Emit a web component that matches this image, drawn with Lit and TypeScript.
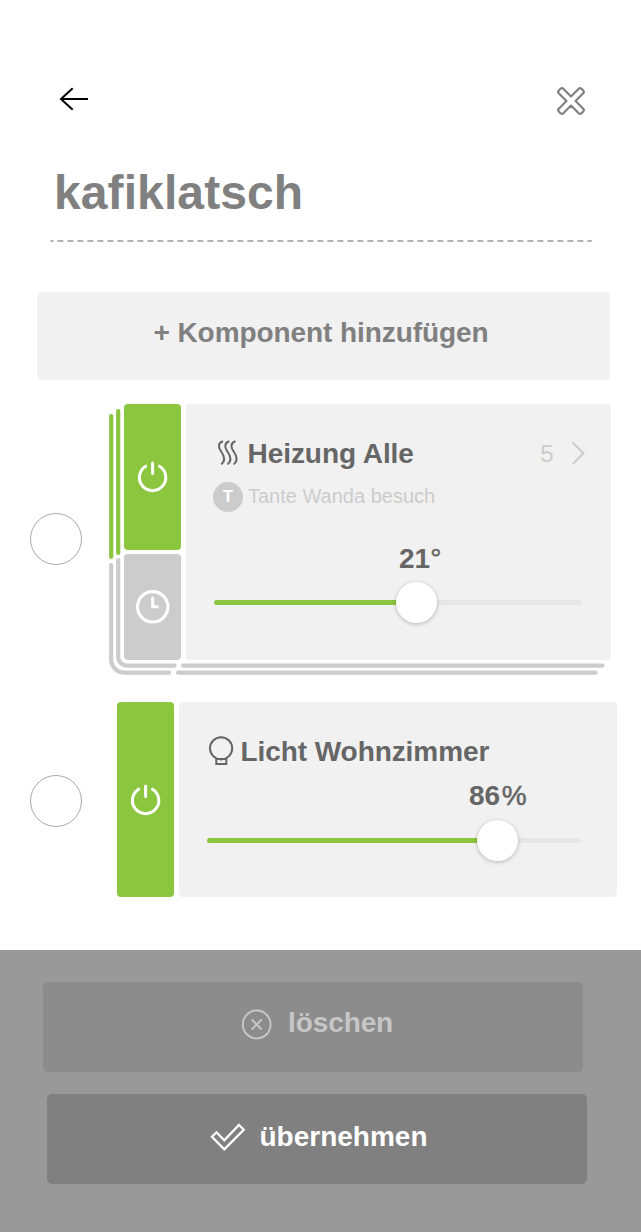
import { LitElement, html, css, svg } from "lit";
import { customElement, property } from "lit/decorators.js";

const powerIcon = html`<svg width="34" height="34" viewBox="-16.6 -17.4 34 34" fill="none" stroke="#fff" stroke-width="3" stroke-linecap="round">
  <path d="M-6.9 -11.2A13.2 13.2 0 1 0 6.9 -11.2M0 -14.3V-3.8" />
</svg>`;

const clockIcon = html`<svg width="36" height="36" viewBox="-17.7 -17.8 36 36" fill="none" stroke="#fff" stroke-width="3.1" stroke-linecap="round" stroke-linejoin="round">
  <circle r="15.2" /><path d="M0 -8.8V0H4.6" />
</svg>`;

const wave = (x: number) =>
  svg`<path d="M${x + 3.6} 1.3C${x - 0.3} 2.6 ${x - 0.7} 7 ${x + 2} 10.6C${x + 4.6} 14.3 ${x + 8} 19.6 ${x + 3.1} 23.6" />`;

const heatIcon = html`<svg width="26" height="26" viewBox="0 0.8 26 26" fill="none" stroke="#666" stroke-width="2" stroke-linecap="round">
  ${[4.7, 11, 17.2].map(wave)}
</svg>`;

const bulbIcon = html`<svg width="28" height="30" viewBox="0 0 28 30" fill="none" stroke="#666" stroke-width="2">
  <circle cx="14.1" cy="11.3" r="11.1" /><path d="M9.3 22.1H19.3V27H9.3Z" />
</svg>`;

@customElement("value-slider")
export class ValueSlider extends LitElement {
  @property({ type: Number }) percent = 0;

  static styles = css`
    :host { display: block; }
    .track { position: relative; display: flex; align-items: center; height: 41px; }
    .track::before { content: ""; flex: 1; height: 5px; border-radius: 3px; background: #e6e6e6; }
    .fill { position: absolute; left: 0; top: 18px; height: 5px; border-radius: 3px; background: #8cc63f; }
    .knob {
      position: absolute; top: 0; width: 41px; height: 41px; margin-left: -20.5px;
      border-radius: 50%; background: #fff; box-shadow: 0 1px 4px rgba(0, 0, 0, 0.25);
    }
  `;

  render() {
    return html`<div class="track">
      <div class="fill" style="width:${this.percent}%"></div>
      <div class="knob" style="left:${this.percent}%"></div>
    </div>`;
  }
}

@customElement("app-root")
export class AppRoot extends LitElement {
  static styles = css`
    :host {
      display: flex; flex-direction: column; width: 641px; height: 1232px; overflow: hidden;
      background: #fff; color: #666; font: bold 28px/32px "Liberation Sans", Arial, sans-serif;
    }
    * { box-sizing: border-box; }
    svg { display: block; flex: none; overflow: visible; }
    .top { display: flex; justify-content: space-between; height: 162px; padding: 86px 55px 0 59px; }
    .title { margin: 0 0 0 54px; height: 78px; font-size: 48px; line-height: 62px; letter-spacing: 0.1px; color: #808080; }
    .rule { margin: 0 0 50px 50px; }
    .add {
      height: 88px; margin: 0 31px 0 37px; padding: 25px 0 0 116.5px; border-radius: 5px;
      background: #f1f1f1; color: #808080; white-space: pre; letter-spacing: -0.08px;
    }
    .row { display: flex; position: relative; padding-left: 30px; }
    .row.first { margin-top: 24px; height: 256px; }
    .row.second { margin-top: 42px; height: 195px; }
    .check { flex: none; width: 52px; height: 52px; border: 1px solid #aaa; border-radius: 50%; }
    .first .check { margin: 109px 42px 0 0; }
    .second .check { margin: 73px 35px 0 0; }
    .stack { position: absolute; left: 105px; top: 0; }
    .tiles { position: relative; display: flex; flex-direction: column; gap: 4px; width: 57px; margin-right: 5px; }
    .tile { display: flex; align-items: center; justify-content: center; border-radius: 4px; flex: 1; }
    .on { background: #8cc63f; }
    .timer { background: #ccc; flex: 0 0 106px; }
    .card { position: relative; border-radius: 4px; background: #f1f1f1; padding: 34px 0 0 28px; }
    .first .card { width: 425px; }
    .second .card { width: 438px; }
    .head { display: flex; align-items: center; height: 32px; white-space: nowrap; letter-spacing: -0.1px; }
    .first .name { margin-left: 7.5px; letter-spacing: -0.05px; }
    .second .name { margin-left: 5.5px; letter-spacing: -0.07px; }
    .count { margin-left: auto; font-size: 24px; font-weight: normal; color: #ccc; }
    .chevron { margin: 0 25px 0 17.5px; }
    .owner { display: flex; align-items: center; margin: 11px 0 0 -1px; height: 31px; font-size: 20px; font-weight: normal; color: #ccc; }
    .badge {
      display: flex; align-items: center; justify-content: center; width: 30px; height: 30px; margin-right: 5px;
      border-radius: 50%; background: #ccc; color: #fff; font-size: 17px; font-weight: bold;
    }
    .owner-name { line-height: 28px; padding-bottom: 1px; }
    .unit { font-weight: normal; -webkit-text-stroke: 0.5px #666; }
    .light-value .unit { margin-left: 1.5px; }
    .heat-value { margin: 31px 0 7px 185px; }
    .light-value { margin: 12px 0 8px 262px; }
    .heat-slider { width: 367.5px; }
    .light-slider { width: 374px; }
    .footer { margin-top: 53px; height: 282px; padding-top: 32px; background: #999; }
    .action { display: flex; width: 540px; height: 90px; border-radius: 5px; }
    .delete { margin: 0 0 22px 43px; padding: 25px 0 0 198px; background: #8c8c8c; color: #c6c6c6; letter-spacing: -0.1px; }
    .apply { margin-left: 47px; padding: 27px 0 0 162px; background: #808080; color: #fff; }
    .delete span { margin-left: 15px; }
    .apply span { margin-left: 12.5px; }
  `;

  render() {
    return html`
      <div class="top">
        <svg width="30" height="26" viewBox="0 0 30 26" fill="none" stroke="#000" stroke-width="2">
          <path d="M29 13H2M13.7 2.3L2 13L13.7 23.7" />
        </svg>
        <svg width="30" height="30" viewBox="-15.2 -15.2 30.4 30.4" fill="none" stroke="#808080" stroke-width="2.2" stroke-linejoin="round">
          <path d="M0 -4.6L-7.8 -12.4Q-9.2 -13.8 -10.6 -12.4L-12.4 -10.6Q-13.8 -9.2 -12.4 -7.8L-4.6 0L-12.4 7.8Q-13.8 9.2 -12.4 10.6L-10.6 12.4Q-9.2 13.8 -7.8 12.4L0 4.6L7.8 12.4Q9.2 13.8 10.6 12.4L12.4 10.6Q13.8 9.2 12.4 7.8L4.6 0L12.4 -7.8Q13.8 -9.2 12.4 -10.6L10.6 -12.4Q9.2 -13.8 7.8 -12.4Z" />
        </svg>
      </div>
      <h1 class="title">kafiklatsch</h1>
      <svg class="rule" width="543" height="2" viewBox="0 0 543 2">
        <path d="M0.4 1H541.8" stroke="#b3b3b3" stroke-width="2" stroke-dasharray="6 4" stroke-dashoffset="3" />
      </svg>
      <div class="add">+ Komponent hinzufügen</div>

      <div class="row first">
        <svg class="stack" width="504" height="275" viewBox="105 404 504 275" fill="none" stroke-width="4.2" stroke-linecap="round">
          <path stroke="#8cc63f" d="M111.2 416V557M118.2 411V553" />
          <path stroke="#ccc" d="M111.2 565V659.5A13.2 13.2 0 0 0 124.4 672.7H169M118.2 560V657A8.6 8.6 0 0 0 126.8 665.6H174.5M183 665.6H602.5M178 672.7H595.5" />
        </svg>
        <div class="check"></div>
        <div class="tiles">
          <div class="tile on">${powerIcon}</div>
          <div class="tile timer">${clockIcon}</div>
        </div>
        <div class="card">
          <div class="head">
            ${heatIcon}<span class="name">Heizung Alle</span><span class="count">5</span>
            <svg class="chevron" width="15" height="24" viewBox="0 0.8 15 24" fill="none" stroke="#ccc" stroke-width="2.1" stroke-linecap="round">
              <path d="M2.3 1.7L12.5 12L2.3 22.3" />
            </svg>
          </div>
          <div class="owner"><span class="badge">T</span><span class="owner-name">Tante Wanda besuch</span></div>
          <div class="heat-value">21<span class="unit">°</span></div>
          <value-slider class="heat-slider" .percent=${55.2}></value-slider>
        </div>
      </div>

      <div class="row second">
        <div class="check"></div>
        <div class="tiles"><div class="tile on">${powerIcon}</div></div>
        <div class="card">
          <div class="head">${bulbIcon}<span class="name">Licht Wohnzimmer</span></div>
          <div class="light-value">86<span class="unit">%</span></div>
          <value-slider class="light-slider" .percent=${77.7}></value-slider>
        </div>
      </div>

      <div class="footer">
        <div class="action delete">
          <svg width="32" height="34" viewBox="0 0 32 34" fill="none" stroke="#c6c6c6" stroke-width="2">
            <circle cx="15.7" cy="17.5" r="13.9" /><path d="M10.7 12.5L20.7 22.5M20.7 12.5L10.7 22.5" />
          </svg>
          <span>löschen</span>
        </div>
        <div class="action apply">
          <svg width="38" height="32" viewBox="209 1121 38 32" fill="none" stroke="#fff" stroke-width="2.3">
            <path d="M211.9 1136.8L216.5 1132.3L224.3 1140.3L238.9 1125L243.8 1129.8L224.3 1149.4Z" />
          </svg>
          <span>übernehmen</span>
        </div>
      </div>
    `;
  }
}
